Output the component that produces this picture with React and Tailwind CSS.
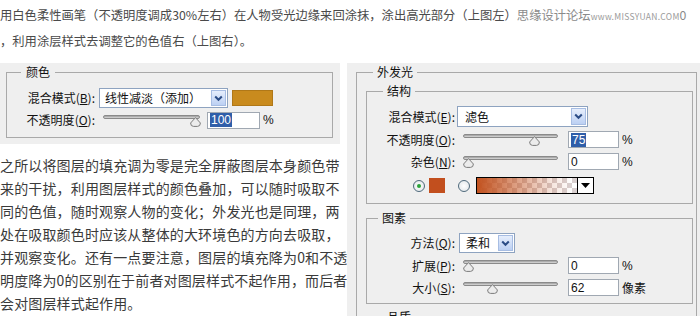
import React from "react";

const M = ({ t, k }) => (
  <span>
    {t}(<span className="underline">{k}</span>):
  </span>
);

const Chevron = () => (
  <svg width="9" height="7" viewBox="0 0 9 7">
    <path d="M1.2 1.5 L4.5 4.8 L7.8 1.5" fill="none" stroke="#2b4c86" strokeWidth="2" />
  </svg>
);

function Select({ className, textPad, children }) {
  return (
    <div className={`${className} border border-[#8ea3c0] bg-white flex items-center shrink-0`}>
      <span className={`flex-1 ${textPad} whitespace-nowrap`}>{children}</span>
      <div className="w-[15px] h-[calc(100%-2px)] mr-[1px] border border-[#a7bde3] bg-[linear-gradient(#e6eefc,#bcd0f3)] flex items-center justify-center">
        <Chevron />
      </div>
    </div>
  );
}

function Slider({ className, pct }) {
  const left = Math.round(pct * 84);
  return (
    <div className={`${className} relative h-[17px] shrink-0`}>
      <div className="absolute left-0 right-0 top-[3px] h-[4px] rounded-full border border-[#8a8a8a] bg-[linear-gradient(#9c9c9c,#dcdcdc)]" />
      <svg className="absolute top-[5px]" style={{ left }} width="11" height="10" viewBox="0 0 11 10">
        <path d="M5.5 0.6 L10.4 6 Q10.4 9.4 7.5 9.4 L3.5 9.4 Q0.6 9.4 0.6 6 Z" fill="#ececec" stroke="#7c7c7c" strokeWidth="1" />
      </svg>
    </div>
  );
}

function Field({ className, children }) {
  return (
    <div className={`${className} h-[17px] border border-[#a0a8b2] bg-white flex items-center pl-[2px] text-[12px] font-['Liberation_Sans',sans-serif] shrink-0`}>
      {children}
    </div>
  );
}

const Sel = ({ children }) => (
  <span className="bg-[#2f5ea9] text-white leading-[14px] px-[1px]">{children}</span>
);

const Radio = ({ on }) => (
  <div className="w-[12px] h-[12px] rounded-full border border-[#4f6a7c] bg-[radial-gradient(#ffffff,#dde3e6)] flex items-center justify-center shrink-0">
    {on && <div className="w-[4px] h-[4px] rounded-full bg-[#2aa33a]" />}
  </div>
);

const Label = ({ children }) => (
  <div className="w-[88px] text-right shrink-0 whitespace-nowrap">{children}</div>
);

export default function App() {
  return (
    <div className="w-[700px] h-[323px] overflow-hidden bg-white font-['Noto_Sans_CJK_SC',sans-serif]">
      {/* top paragraph */}
      <div className="pt-[3px] text-[12.3px] leading-[25px] text-[#4a4a4a] whitespace-nowrap">
        <div>
          用白色柔性画笔（不透明度调成30%左右）在人物受光边缘来回涂抹，涂出高光部分（上图左）
          <span className="text-[#8a8a8a]">思缘设计论坛</span>
          <span className="text-[8.5px] text-[#9a9a9a] tracking-[0.3px]">www.MISSYUAN.COM</span>
          <span className="text-[#8a8a8a]">0</span>
        </div>
        <div>，利用涂层样式去调整它的色值右（上图右）。</div>
      </div>

      <div className="flex mt-[9px]">
        {/* left column */}
        <div className="w-[340px] shrink-0">
          <div className="h-[81px] bg-[#efefef] pt-[1px] pl-[6px] pr-[7px] text-[12px] text-[#111]">
            <fieldset className="border border-[#a9a9a9]">
              <legend className="ml-[14px] px-[5px] leading-[16px]">颜色</legend>
              <div className="pt-[8px] pb-[8px]">
                <div className="flex items-center h-[20px]">
                  <Label><M t="混合模式" k="B" /></Label>
                  <Select className="ml-[4px] w-[129px] h-[20px]" textPad="pl-[5px]">线性减淡（添加）</Select>
                  <div className="ml-[4px] w-[41px] h-[16px] bg-[#c98b1e] border border-[#b07818]" />
                </div>
                <div className="flex items-center h-[18px] mt-[3px]">
                  <Label><M t="不透明度" k="O" /></Label>
                  <Slider className="ml-[8px] w-[97px]" pct={1.03} />
                  <Field className="ml-[7px] w-[53px]"><Sel>100</Sel></Field>
                  <span className="ml-[3px] font-['Liberation_Sans',sans-serif]">%</span>
                </div>
              </div>
            </fieldset>
          </div>

          <div className="mt-[10px] text-[14px] tracking-[0.15px] leading-[23px] text-[#3a3a3a] whitespace-nowrap">
            <div>之所以将图层的填充调为零是完全屏蔽图层本身颜色带</div>
            <div>来的干扰，利用图层样式的颜色叠加，可以随时吸取不</div>
            <div>同的色值，随时观察人物的变化；外发光也是同理，两</div>
            <div>处在吸取颜色时应该从整体的大环境色的方向去吸取，</div>
            <div>并观察变化。还有一点要注意，图层的填充降为0和不透</div>
            <div>明度降为0的区别在于前者对图层样式不起作用，而后者</div>
            <div>会对图层样式起作用。</div>
          </div>
        </div>

        {/* right panel */}
        <div className="ml-[7px] w-[353px] h-[253px] overflow-hidden bg-[#efefef] pt-[1px] pl-[9px] pr-[3px] text-[12px] text-[#111]">
          <fieldset className="border border-[#a9a9a9]">
            <legend className="ml-[16px] px-[4px] leading-[16px]">外发光</legend>
            <div className="ml-[9px] mr-[3px] mt-[3px]">
              {/* 结构 */}
              <fieldset className="border border-[#a9a9a9]">
                <legend className="ml-[16px] px-[4px] leading-[16px]">结构</legend>
                <div className="pt-[7px] pb-[9px]">
                  <div className="flex items-center h-[21px]">
                    <Label><M t="混合模式" k="E" /></Label>
                    <Select className="ml-[2px] w-[131px] h-[21px]" textPad="pl-[7px]">滤色</Select>
                  </div>
                  <div className="flex items-center h-[17px] mt-[4px]">
                    <Label><M t="不透明度" k="O" /></Label>
                    <Slider className="ml-[8px] w-[95px]" pct={0.79} />
                    <Field className="ml-[10px] w-[51px]"><Sel>75</Sel></Field>
                    <span className="ml-[3px] font-['Liberation_Sans',sans-serif]">%</span>
                  </div>
                  <div className="flex items-center h-[17px] mt-[5px]">
                    <Label><M t="杂色" k="N" /></Label>
                    <Slider className="ml-[8px] w-[95px]" pct={0} />
                    <Field className="ml-[10px] w-[51px]">0</Field>
                    <span className="ml-[3px] font-['Liberation_Sans',sans-serif]">%</span>
                  </div>
                  <div className="flex items-center h-[17px] mt-[7px] pl-[46px]">
                    <Radio on />
                    <div className="ml-[4px] w-[16px] h-[15px] bg-[#c24f1e]" />
                    <div className="ml-[13px]"><Radio /></div>
                    <div className="ml-[6px] w-[118px] h-[17px] border border-black flex">
                      <div className="flex-1 bg-[repeating-conic-gradient(#d9d0d0_0%_25%,#ffffff_0%_50%)] bg-[length:10px_10px]">
                        <div className="h-full bg-[linear-gradient(to_right,#c2521f_0%,rgba(194,82,31,0.6)_35%,rgba(194,82,31,0.15)_75%,rgba(194,82,31,0)_95%)]" />
                      </div>
                      <div className="w-[16px] border-l border-black bg-white flex items-center justify-center">
                        <svg width="9" height="5" viewBox="0 0 9 5"><path d="M0 0 L9 0 L4.5 5 Z" fill="#000" /></svg>
                      </div>
                    </div>
                  </div>
                </div>
              </fieldset>

              {/* 图素 */}
              <fieldset className="border border-[#a9a9a9] mt-[6px]">
                <legend className="ml-[11px] px-[4px] leading-[16px]">图素</legend>
                <div className="pt-[7px] pb-[7px]">
                  <div className="flex items-center h-[20px]">
                    <Label><M t="方法" k="Q" /></Label>
                    <Select className="ml-[4px] w-[56px] h-[20px]" textPad="pl-[6px]">柔和</Select>
                  </div>
                  <div className="flex items-center h-[17px] mt-[4px]">
                    <Label><M t="扩展" k="P" /></Label>
                    <Slider className="ml-[8px] w-[95px]" pct={0} />
                    <Field className="ml-[10px] w-[51px]">0</Field>
                    <span className="ml-[3px] font-['Liberation_Sans',sans-serif]">%</span>
                  </div>
                  <div className="flex items-center h-[17px] mt-[5px]">
                    <Label><M t="大小" k="S" /></Label>
                    <Slider className="ml-[8px] w-[95px]" pct={0.28} />
                    <Field className="ml-[10px] w-[51px]">62</Field>
                    <span className="ml-[3px]">像素</span>
                  </div>
                </div>
              </fieldset>

              {/* 品质 (cut off) */}
              <fieldset className="border border-[#a9a9a9] mt-[5px]">
                <legend className="ml-[16px] px-[4px] leading-[16px]">品质</legend>
                <div className="h-[40px]" />
              </fieldset>
            </div>
          </fieldset>
        </div>
      </div>
    </div>
  );
}
